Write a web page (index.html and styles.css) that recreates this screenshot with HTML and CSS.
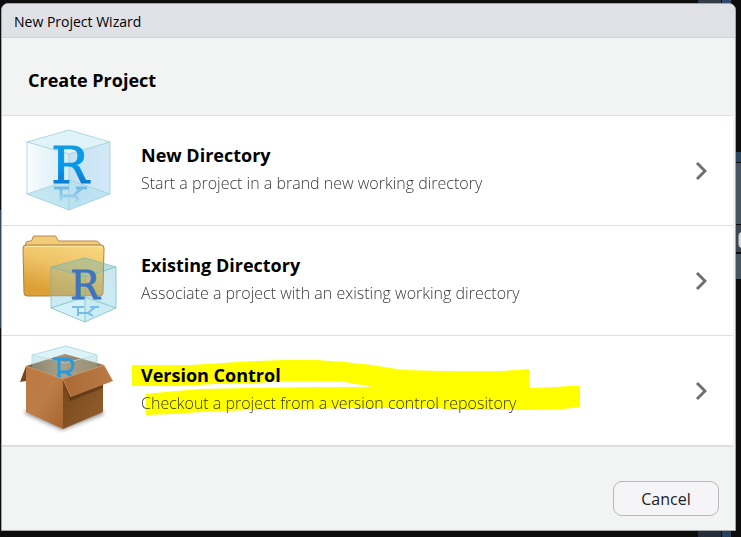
FILE: index.html
```
<!DOCTYPE html>
<html lang="en">
<head>
<meta charset="utf-8">
<meta name="viewport" content="width=device-width, initial-scale=1">
<title>New Project Wizard</title>
<link rel="stylesheet" href="styles.css">
</head>
<body>
<svg class="backdrop backdrop-right" width="43" height="537" aria-hidden="true">
  <path fill="#333d47" d="M0 0h23v4H0z"/><path fill="#2f4b68" d="M24 0h9v4h-9z"/>
  <path fill="#2d4660" d="M38 152h5v10h-5z"/><path fill="#465360" d="M38 163h5v61h-5z"/>
  <path fill="#3c4550" d="M38 225h5v27h-5z"/><path fill="#465360" d="M38 254h5v25h-5z"/>
  <path fill="#d5dade" stroke="#d5dade" d="M43 233h-1l-1 2v10l1 2h1"/>
  <path fill="#252d38" d="M0 531h23v6H0z"/><path fill="#29405a" d="M24 531h9v6h-9z"/>
</svg>
<div class="backdrop backdrop-left"></div>
<main class="dialog">
  <header class="titlebar">New Project Wizard</header>
  <h1 class="heading">Create Project</h1>
  <div class="options">
    <button class="option" type="button">
      <svg class="icon" viewBox="18 121 100 100" aria-hidden="true">
        <defs>
          <linearGradient id="left" x1="0" x2="1"><stop offset="0" stop-color="#f8fcfe"/><stop offset="1" stop-color="#d5edf7"/></linearGradient>
          <linearGradient id="right" x1="0" x2="1"><stop offset="0" stop-color="#c4e2f3"/><stop offset="1" stop-color="#d3e9f8"/></linearGradient>
          <linearGradient id="blue" x1="0" y1="0" x2="0" y2="1"><stop offset="0" stop-color="#159be0"/><stop offset=".5" stop-color="#0699e8"/><stop offset="1" stop-color="#1266c0"/></linearGradient>
          <linearGradient id="fade" gradientUnits="userSpaceOnUse" x1="0" y1="187" x2="0" y2="202"><stop offset="0" stop-color="#6bb8e4"/><stop offset="1" stop-color="#b3dbef"/></linearGradient>
        </defs>
        <path fill="url(#left)" d="M27 142l42 11v57l-42-16z"/>
        <path fill="url(#right)" d="M69 153l41-11v52l-41 16z"/>
        <path fill="#e0f3f8" d="M27 142l42-12 41 12-41 12z"/>
        <path fill="#b7e0ef" fill-opacity=".75" d="M27 194l42-14 41 14-41 16z"/>
        <path fill="none" stroke="#9fd0d8" stroke-opacity=".8" d="M27 142l42-12 41 12v52l-41 16-42-16zl42 12 41-12M69 154v56M27 194l42-14 41 14"/>
        <text class="letter" x="70" y="183" font-size="50" text-anchor="middle" fill="url(#blue)" stroke="url(#blue)">R</text>
        <path fill="none" stroke="url(#fade)" stroke-width="3" d="M54 188h15M76 188h11M61 188v13"/>
        <path fill="none" stroke="url(#fade)" stroke-width="3" d="M82 188l-9 8H61M73 196c6 1 6 4 2 6"/>
      </svg>
      <span class="copy"><strong class="name">New Directory</strong><span class="detail">Start a project in a brand new working directory</span></span>
      <svg class="chevron" viewBox="0 0 12 20" aria-hidden="true"><path d="M2 2l8 8-8 8"/></svg>
    </button>
    <button class="option" type="button">
      <svg class="icon" viewBox="18 231 100 100" aria-hidden="true">
        <defs>
          <linearGradient id="folder" x1="1" y1="0" x2=".6" y2="1"><stop offset="0" stop-color="#f8d97f"/><stop offset=".5" stop-color="#efc368"/><stop offset="1" stop-color="#dda037"/></linearGradient>
          <linearGradient id="glass" x1="0" y1="0" x2="0" y2="1"><stop offset="0" stop-color="#69b6b5" stop-opacity=".25"/><stop offset="1" stop-color="#8fd6ee" stop-opacity=".35"/></linearGradient>
        </defs>
        <path fill="#f2cc78" stroke="#b98749" d="M25.500 246v-2q0-3 4-3h2l2-5h22l3 5h37q4 0 5 5z"/>
        <path fill="url(#folder)" stroke="#ad8145" d="M26 245h75q3 0 3 3l-1 45q0 3-3 3H27q-3 0-3-3l-1-45q0-3 3-3z"/>
        <path stroke="#ffe79f" d="M26 246.500h75"/>
        <path fill="#dff3fc" fill-opacity=".6" d="M104 264l12 4v40l-31 14-34-14v-12h53z"/>
        <path fill="url(#glass)" d="M51 267l34-9 31 9v41l-31 14-34-14z"/>
        <path fill="#75b6b6" fill-opacity=".2" d="M51 267l34-9 31 9-31 10z"/>
        <path fill="#d8f5ff" fill-opacity=".55" d="M51 308l34-10v24z"/>
        <path fill="none" stroke="#70b9b5" stroke-opacity=".7" d="M51 267l34-9 31 9v41l-31 14-34-14zl34 10 31-10M85 277v45M51 308l34-11 31 11"/>
        <text class="letter" x="85" y="299" font-size="39" text-anchor="middle" fill="#3d74bf" stroke="#3d74bf">R</text>
        <path fill="none" stroke="#75bce6" stroke-width="2" d="M72 307h12M90 307h9M78 307v9M95 307l-7 6H78M88 313l5 3"/>
      </svg>
      <span class="copy"><strong class="name">Existing Directory</strong><span class="detail">Associate a project with an existing working directory</span></span>
      <svg class="chevron" viewBox="0 0 12 20" aria-hidden="true"><path d="M2 2l8 8-8 8"/></svg>
    </button>
    <button class="option" type="button">
      <svg class="marker" viewBox="132 360 448 56" aria-hidden="true"><path d="M132 365h59l31-2 36-2 25-1h33l29 2 27 3 18 3 14 2 36 1h62l14-1 13-1v19l26-1 14-1h11v21l-17 2-32 1h-83l-8-2h-90l-50 1-50 1-50 2-28 2-26 1v-21l19-2 35-3 50-1 66-1h53v-1l-14-2-10-2-30-1h-25l-35 2-40 1-35 2h-48z"/></svg>
      <svg class="icon" viewBox="18 341 100 100" aria-hidden="true">
        <defs>
          <linearGradient id="front" x1="0" y1="0" x2="1" y2="1"><stop offset="0" stop-color="#bd7840"/><stop offset=".5" stop-color="#bc7d48"/><stop offset="1" stop-color="#a66631"/></linearGradient>
          <linearGradient id="side" x1="0" y1="0" x2="1" y2="1"><stop offset="0" stop-color="#714219"/><stop offset="1" stop-color="#95602d"/></linearGradient>
          <linearGradient id="flap" x1="0" y1="0" x2="1" y2="0"><stop offset="0" stop-color="#aa6935"/><stop offset="1" stop-color="#ba7b47"/></linearGradient>
          <linearGradient id="inside" x1="0" y1="0" x2="1" y2="0"><stop offset="0" stop-color="#756044"/><stop offset=".45" stop-color="#a39072"/><stop offset="1" stop-color="#897451"/></linearGradient>
          <filter id="shadow"><feGaussianBlur stdDeviation="2"/></filter>
        </defs>
        <path fill="#555" opacity=".65" filter="url(#shadow)" d="M24 413l38 17 42-16-3-5-70-2z"/>
        <path fill="#def3f8" stroke="#b2dce6" d="M32 355l34-9 31 9v15l-31 8-34-8z"/>
        <path fill="url(#inside)" d="M26 366l39-12 39 11-41 15z"/>
        <path fill="#bdd7d4" fill-opacity=".25" d="M32 355l33 9 32-9v13l-34 11-31-11z"/>
        <path fill="none" stroke="#b6dce1" stroke-opacity=".8" d="M32 355l33 8 32-8"/>
        <path fill="none" stroke="#249be3" stroke-width="3" d="M53 359h14c8 0 8 13-1 13h-7M59 359v19M56 377h5M67 372l4 5"/>
        <path fill="#744421" d="M26 366l-6 16 6-1z"/>
        <path fill="url(#front)" d="M26 366l37 13v50l-37-17z"/>
        <path fill="url(#side)" d="M63 379l40-13v46l-40 17z"/>
        <path fill="#4e2b0e" opacity=".55" d="M63 379l7 22 33-13v-7l-32 14z"/>
        <path fill="url(#flap)" d="M63 379l41-14 9 16-42 16z"/>
        <path fill="none" stroke="#d7a06b" stroke-opacity=".7" d="M26 366l37 13 8 18M63 379l41-14"/>
      </svg>
      <span class="copy"><strong class="name">Version Control</strong><span class="detail">Checkout a project from a version control repository</span></span>
      <svg class="chevron" viewBox="0 0 12 20" aria-hidden="true"><path d="M2 2l8 8-8 8"/></svg>
    </button>
  </div>
  <footer class="actions"><button class="cancel" type="button">Cancel</button></footer>
</main>
</body>
</html>
```
FILE: styles.css
```
* { box-sizing: border-box; }
body {
  margin: 0;
  min-height: 100vh;
  padding: 3px 5px 6px 1px;
  display: flex;
  background: #0c0c0d;
  color: #000;
  font-family: "Segoe UI", "Open Sans", "Noto Sans", sans-serif;
}
.backdrop { position: absolute; top: 0; }
.backdrop-right { right: 0; }
.backdrop-left { left: 0; top: 210px; width: 1px; height: 118px; background: #3b4b5c; }
.dialog {
  position: relative;
  flex: 1;
  display: flex;
  flex-direction: column;
  border: 1px solid #a5a6a8;
  border-radius: 7px 7px 0 0;
  background: #f2f4f4;
  overflow: hidden;
}
.titlebar {
  height: 34px;
  padding: 0 12px;
  border-bottom: 1px solid #d2d3d5;
  background: #e0e1e6;
  font-size: 14px;
  line-height: 35px;
}
.heading {
  height: 77px;
  margin: 0;
  padding: 0 26px;
  font-size: 18px;
  font-weight: 700;
  line-height: 84px;
}
.options { margin-right: 2px; border-top: 1px solid #dfe1e1; border-bottom: 1px solid #dfe1e1; }
.option {
  position: relative;
  display: flex;
  align-items: center;
  width: 100%;
  height: 110px;
  padding: 0 26px 0 16px;
  border: 0;
  border-bottom: 1px solid #dedfdf;
  background: #fff;
  font: inherit;
  text-align: left;
}
.icon { flex: none; width: 100px; height: 100px; }
.letter { font-family: "DejaVu Serif", serif; stroke-width: 1px; }
.copy { position: relative; flex: 1; display: flex; flex-direction: column; margin-left: 23px; padding-bottom: 1px; }
.name { font-size: 18px; font-weight: 700; line-height: 26px; color: #000; }
.detail { font-size: 16px; font-weight: 300; line-height: 30px; color: #000; opacity: .8; }
.chevron { flex: none; width: 12px; height: 20px; fill: none; stroke: #707070; stroke-width: 3px; }
.marker { position: absolute; left: 130px; top: 24px; width: 448px; height: 56px; fill: #ff0; }
.actions { flex: 1; display: flex; align-items: flex-end; justify-content: flex-end; padding: 0 16px 14px; }
.cancel {
  width: 106px;
  height: 35px;
  border: 1px solid #b8b8ba;
  border-radius: 9px;
  background: #f5f5f8;
  color: #222;
  font: inherit;
  font-size: 16px;
}
```
